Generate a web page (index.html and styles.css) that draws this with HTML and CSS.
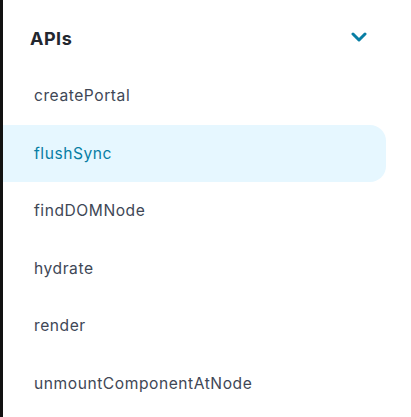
FILE: index.html
```html
<!DOCTYPE html>
<html lang="en">
<head>
    <meta charset="UTF-8">
    <meta name="viewport" content="width=device-width, initial-scale=1.0">
    <title>APIs</title>
    <link rel="stylesheet" href="styles.css">
</head>
<body>
    <nav class="sidebar">
        <div class="section-header">
            <h3>APIs</h3>
            <svg class="chevron" width="16" height="10" viewBox="0 0 16 10" aria-hidden="true">
                <path d="M2 2 L8 8 L14 2" fill="none" stroke="currentColor" stroke-width="3" stroke-linecap="round" stroke-linejoin="round"/>
            </svg>
        </div>
        <ul class="nav-list">
            <li><a href="#">createPortal</a></li>
            <li><a href="#" class="active">flushSync</a></li>
            <li><a href="#">findDOMNode</a></li>
            <li><a href="#">hydrate</a></li>
            <li><a href="#">render</a></li>
            <li><a href="#">unmountComponentAtNode</a></li>
        </ul>
    </nav>
</body>
</html>
```

FILE: styles.css
```css
html, body {
    margin: 0;
    height: 100%;
    background-color: white;
}
body {
    font-family: Inter, 'Noto Sans', sans-serif;
}
.sidebar {
    min-height: 100%;
    border-left: 3px solid #121212;
    padding-right: 25px;
    box-sizing: border-box;
}
.section-header {
    display: flex;
    align-items: center;
    justify-content: space-between;
    height: 67px;
    padding: 9px 19px 0 27px;
    box-sizing: border-box;
}
.section-header h3 {
    margin: 0;
    font-size: 18px;
    font-weight: 700;
    letter-spacing: 0.5px;
    color: #23272f;
}
.chevron {
    color: #087ea4;
    margin-top: -2px;
}
.nav-list {
    list-style: none;
    margin: 0;
    padding: 0;
}
.nav-list a {
    display: flex;
    align-items: center;
    height: 57.5px;
    padding-left: 31px;
    font-size: 15.6px;
    letter-spacing: 0.55px;
    color: #404756;
    text-decoration: none;
    border-radius: 0 16px 16px 0;
}
.nav-list a.active {
    background-color: #e6f7ff;
    color: #087ea4;
}
```
